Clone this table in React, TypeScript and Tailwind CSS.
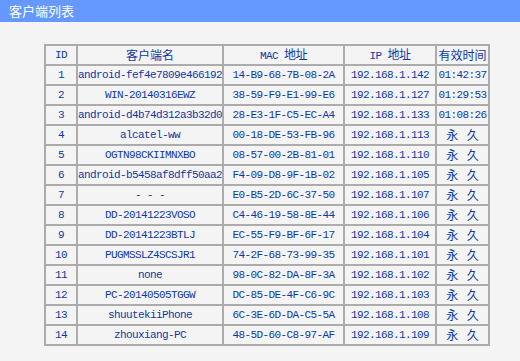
import React from 'react';

const CLIENTS = [
  { id: 1, name: 'android-fef4e7809e466192', mac: '14-B9-68-7B-08-2A', ip: '192.168.1.142', time: '01:42:37' },
  { id: 2, name: 'WIN-20140316EWZ', mac: '38-59-F9-E1-99-E6', ip: '192.168.1.127', time: '01:29:53' },
  { id: 3, name: 'android-d4b74d312a3b32d0', mac: '28-E3-1F-C5-EC-A4', ip: '192.168.1.133', time: '01:08:26' },
  { id: 4, name: 'alcatel-ww', mac: '00-18-DE-53-FB-96', ip: '192.168.1.113', time: '' },
  { id: 5, name: 'OGTN98CKIIMNXBO', mac: '08-57-00-2B-81-01', ip: '192.168.1.110', time: '' },
  { id: 6, name: 'android-b5458af8dff50aa2', mac: 'F4-09-D8-9F-1B-02', ip: '192.168.1.105', time: '' },
  { id: 7, name: '- - -', mac: 'E0-B5-2D-6C-37-50', ip: '192.168.1.107', time: '' },
  { id: 8, name: 'DD-20141223VOSO', mac: 'C4-46-19-58-8E-44', ip: '192.168.1.106', time: '' },
  { id: 9, name: 'DD-20141223BTLJ', mac: 'EC-55-F9-BF-6F-17', ip: '192.168.1.104', time: '' },
  { id: 10, name: 'PUGMSSLZ4SCSJR1', mac: '74-2F-68-73-99-35', ip: '192.168.1.101', time: '' },
  { id: 11, name: 'none', mac: '98-0C-82-DA-8F-3A', ip: '192.168.1.102', time: '' },
  { id: 12, name: 'PC-20140505TGGW', mac: 'DC-85-DE-4F-C6-9C', ip: '192.168.1.103', time: '' },
  { id: 13, name: 'shuutekiiPhone', mac: '6C-3E-6D-DA-C5-5A', ip: '192.168.1.108', time: '' },
  { id: 14, name: 'zhouxiang-PC', mac: '48-5D-60-C8-97-AF', ip: '192.168.1.109', time: '' },
];

const mono = 'font-["Liberation_Mono","Noto_Sans_CJK_SC",monospace] text-[11px] tracking-[-0.6px]';
const cjk = 'font-["Noto_Sans_CJK_SC",sans-serif] text-[12px]';
const cell = 'h-[20px] border-2 border-[#acacac] p-0 text-center leading-[16px] whitespace-nowrap overflow-hidden';

export default function App() {
  return (
    <div className="h-[361px] w-[520px] overflow-hidden bg-[#f4f4f4] text-[#0f38a4]">
      <div className={`flex h-[22px] items-center bg-[#6699ff] pl-[9px] text-white ${cjk} text-[13px]`}>客户端列表</div>

      <table className="ml-[44px] mt-[22px] w-[444px] table-fixed border-collapse border-2 border-[#acacac]">
        <colgroup>
          <col className="w-[32px]" />
          <col className="w-[146px]" />
          <col className="w-[121px]" />
          <col className="w-[92px]" />
          <col className="w-[53px]" />
        </colgroup>
        <thead>
          <tr>
            <th className={`${cell} ${mono} font-normal`}>ID</th>
            <th className={`${cell} ${cjk} font-normal`}>客户端名</th>
            <th className={`${cell} ${mono} font-normal`}>
              MAC <span className={cjk}>地址</span>
            </th>
            <th className={`${cell} ${mono} font-normal`}>
              IP <span className={cjk}>地址</span>
            </th>
            <th className={`${cell} ${cjk} font-normal`}>有效时间</th>
          </tr>
        </thead>
        <tbody>
          {CLIENTS.map((c) => (
            <tr key={c.id}>
              <td className={`${cell} ${mono}`}>{c.id}</td>
              <td className={`${cell} ${mono}`}>{c.name}</td>
              <td className={`${cell} ${mono}`}>{c.mac}</td>
              <td className={`${cell} ${mono}`}>{c.ip}</td>
              {c.time ? (
                <td className={`${cell} ${mono}`}>{c.time}</td>
              ) : (
                <td className={`${cell} ${cjk} tracking-[3px] pl-[3px]`}>永 久</td>
              )}
            </tr>
          ))}
        </tbody>
      </table>
    </div>
  );
}
